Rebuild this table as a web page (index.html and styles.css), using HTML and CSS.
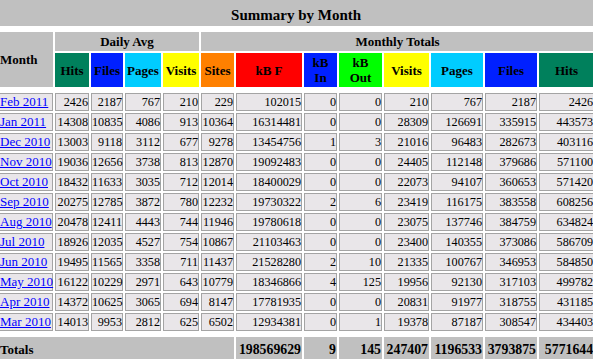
FILE: index.html
```html
<!DOCTYPE html>
<html>
<head>
<meta charset="utf-8">
<title>Summary by Month</title>
<link rel="stylesheet" href="styles.css">
</head>
<body>
<table class="summary">
<colgroup>
<col class="w55"><col class="w34"><col class="w32"><col class="w36"><col class="w36"><col class="w33"><col class="w66"><col class="w33"><col class="w43"><col class="w45"><col class="w52"><col class="w52"><col class="w55">
</colgroup>
<tr><th colspan="13" class="title">Summary by Month</th></tr>
<tr class="sp"><td colspan="13"></td></tr>
<tr class="groups"><th rowspan="2" class="grey month-h">Month</th><th colspan="4" class="grey">Daily Avg</th><th colspan="8" class="grey">Monthly Totals</th></tr>
<tr class="heads"><th class="hits">Hits</th><th class="files">Files</th><th class="pages">Pages</th><th class="visits">Visits</th><th class="sites">Sites</th><th class="kbf">kB F</th><th class="kbin">kB In</th><th class="kbout">kB Out</th><th class="visits">Visits</th><th class="pages">Pages</th><th class="files">Files</th><th class="hits">Hits</th></tr>
<tr class="sp"><td colspan="13"></td></tr>
<tr class="row"><td class="m"><a href="#">Feb 2011</a></td><td>2426</td><td>2187</td><td>767</td><td>210</td><td>229</td><td>102015</td><td>0</td><td>0</td><td>210</td><td>767</td><td>2187</td><td>2426</td></tr>
<tr class="row"><td class="m"><a href="#">Jan 2011</a></td><td>14308</td><td>10835</td><td>4086</td><td>913</td><td>10364</td><td>16314481</td><td>0</td><td>0</td><td>28309</td><td>126691</td><td>335915</td><td>443573</td></tr>
<tr class="row"><td class="m"><a href="#">Dec 2010</a></td><td>13003</td><td>9118</td><td>3112</td><td>677</td><td>9278</td><td>13454756</td><td>1</td><td>3</td><td>21016</td><td>96483</td><td>282673</td><td>403116</td></tr>
<tr class="row"><td class="m"><a href="#">Nov 2010</a></td><td>19036</td><td>12656</td><td>3738</td><td>813</td><td>12870</td><td>19092483</td><td>0</td><td>0</td><td>24405</td><td>112148</td><td>379686</td><td>571100</td></tr>
<tr class="row"><td class="m"><a href="#">Oct 2010</a></td><td>18432</td><td>11633</td><td>3035</td><td>712</td><td>12014</td><td>18400029</td><td>0</td><td>0</td><td>22073</td><td>94107</td><td>360653</td><td>571420</td></tr>
<tr class="row"><td class="m"><a href="#">Sep 2010</a></td><td>20275</td><td>12785</td><td>3872</td><td>780</td><td>12232</td><td>19730322</td><td>2</td><td>6</td><td>23419</td><td>116175</td><td>383558</td><td>608256</td></tr>
<tr class="row"><td class="m"><a href="#">Aug 2010</a></td><td>20478</td><td>12411</td><td>4443</td><td>744</td><td>11946</td><td>19780618</td><td>0</td><td>0</td><td>23075</td><td>137746</td><td>384759</td><td>634824</td></tr>
<tr class="row"><td class="m"><a href="#">Jul 2010</a></td><td>18926</td><td>12035</td><td>4527</td><td>754</td><td>10867</td><td>21103463</td><td>0</td><td>0</td><td>23400</td><td>140355</td><td>373086</td><td>586709</td></tr>
<tr class="row"><td class="m"><a href="#">Jun 2010</a></td><td>19495</td><td>11565</td><td>3358</td><td>711</td><td>11437</td><td>21528280</td><td>2</td><td>10</td><td>21335</td><td>100767</td><td>346953</td><td>584850</td></tr>
<tr class="row"><td class="m"><a href="#">May 2010</a></td><td>16122</td><td>10229</td><td>2971</td><td>643</td><td>10779</td><td>18346866</td><td>4</td><td>125</td><td>19956</td><td>92130</td><td>317103</td><td>499782</td></tr>
<tr class="row"><td class="m"><a href="#">Apr 2010</a></td><td>14372</td><td>10625</td><td>3065</td><td>694</td><td>8147</td><td>17781935</td><td>0</td><td>0</td><td>20831</td><td>91977</td><td>318755</td><td>431185</td></tr>
<tr class="row"><td class="m"><a href="#">Mar 2010</a></td><td>14013</td><td>9953</td><td>2812</td><td>625</td><td>6502</td><td>12934381</td><td>0</td><td>1</td><td>19378</td><td>87187</td><td>308547</td><td>434403</td></tr>
<tr class="sp"><td colspan="13"></td></tr>
<tr class="totals"><th colspan="6" class="tl">Totals</th><th>198569629</th><th>9</th><th>145</th><th>247407</th><th>1196533</th><th>3793875</th><th>5771644</th></tr>
</table>
</body>
</html>
```

FILE: styles.css
```css
html, body {
  margin: 0;
  padding: 0;
  background: #ffffff;
}

body {
  font-family: "Liberation Serif", "Times New Roman", serif;
  font-size: 13px;
  color: #000000;
  overflow: hidden;
}

.summary {
  width: 600px;
  table-layout: fixed;
  border-collapse: separate;
  border-spacing: 2px;
  margin: -3px 0 0 -4px;
}

.w55 { width: 55px; }
.w34 { width: 34px; }
.w32 { width: 32px; }
.w36 { width: 36px; }
.w33 { width: 33px; }
.w66 { width: 66px; }
.w43 { width: 43px; }
.w45 { width: 45px; }
.w52 { width: 52px; }

.summary th,
.summary td {
  padding: 1px;
  border: 1px solid transparent;
  line-height: 15px;
  white-space: nowrap;
}

.summary th {
  font-weight: bold;
  text-align: center;
  vertical-align: middle;
}

.summary .title {
  background: #c0c0c0;
  font-size: 15px;
  line-height: 18px;
  padding: 6px 1px 1px;
}

.summary .sp td {
  height: 2px;
  padding: 0;
  border: 0;
  line-height: 0;
  font-size: 0;
  background: none;
}

.grey { background: #c0c0c0; }

.summary .month-h { text-align: left; }

.summary .heads th { white-space: normal; }

.hits { background: #00805c; }
.files { background: #0020ff; }
.pages { background: #00ccff; }
.visits { background: #ffff00; }
.sites { background: #ff8000; }
.kbf { background: #ff0000; }
.kbin { background: #0020ff; }
.kbout { background: #00ff00; }

.summary .row td {
  background: #e9e6e9;
  border-color: #a4a4a4;
  font-size: 12.2px;
  line-height: 14px;
  padding: 1px 0;
  text-align: right;
}

.summary .row td.m {
  text-align: left;
  font-size: 13px;
  padding-left: 1px;
}

.row a {
  color: #0000ff;
  text-decoration: underline;
}

.summary .totals th {
  background: #c0c0c0;
  font-size: 13.8px;
  text-align: right;
  padding: 4px 0 4px 1px;
}

.summary .totals th.tl { text-align: left; font-size: 13px; }
```
